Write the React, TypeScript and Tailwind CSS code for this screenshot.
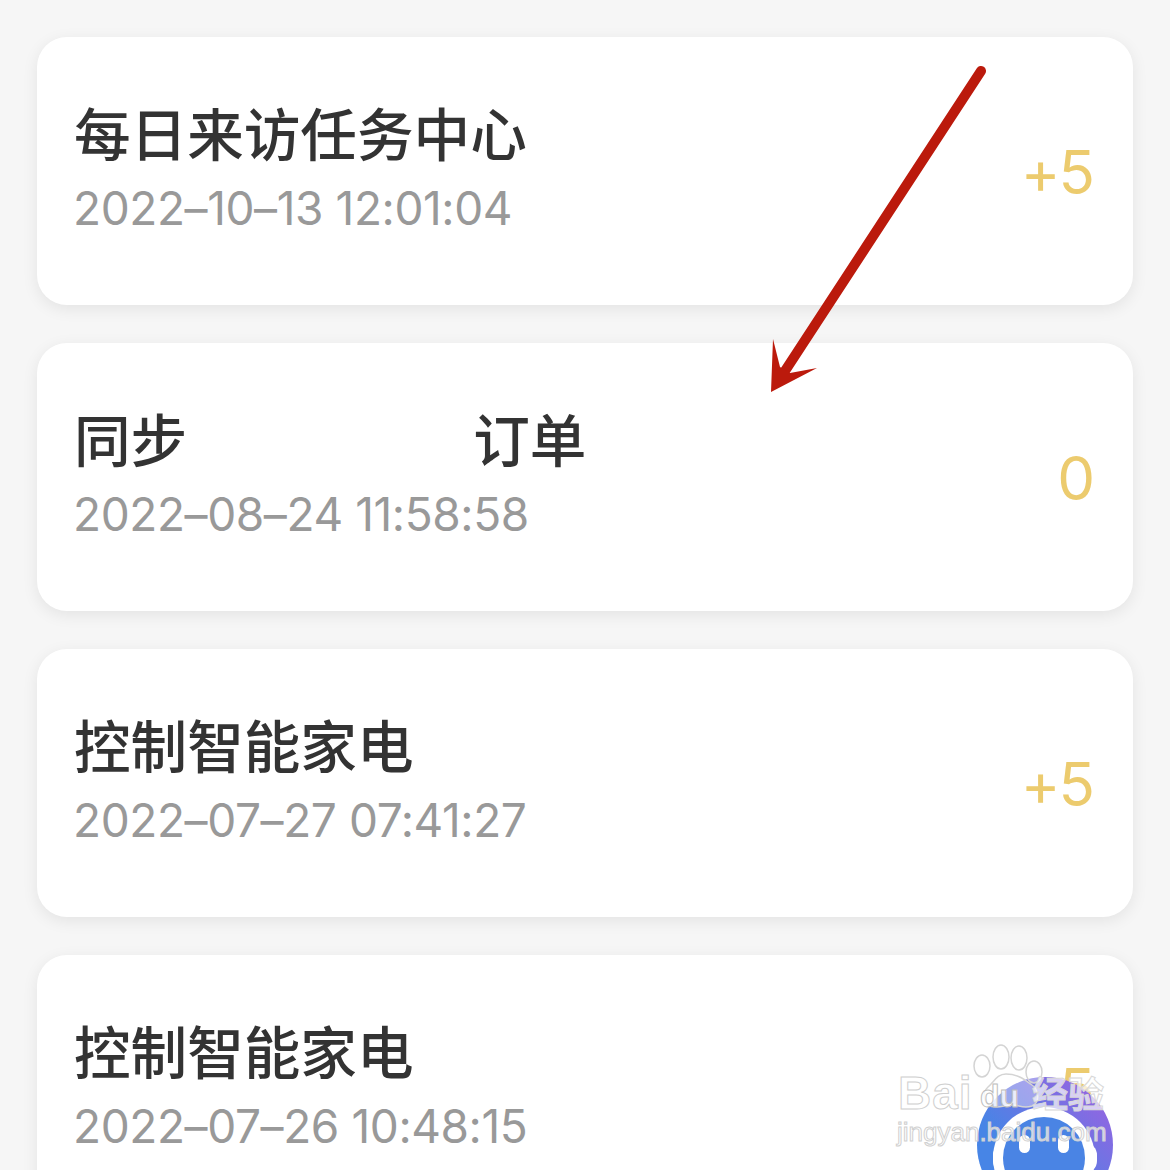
const rows = [
  { title: '每日来访任务中心', date: '2022–10–13 12:01:04', value: '+5' },
  { title: '同步', suffix: '订单', date: '2022–08–24 11:58:58', value: '0' },
  { title: '控制智能家电', date: '2022–07–27 07:41:27', value: '+5' },
  { title: '控制智能家电', date: '2022–07–26 10:48:15', value: '+5' },
];

function RecordCard({ title, suffix, date, value }: { title: string; suffix?: string; date: string; value: string }) {
  return (
    <div className="flex h-[268px] shrink-0 items-center justify-between rounded-[30px] bg-white pl-[37px] pr-[40px] shadow-[0_4px_16px_rgba(0,0,0,0.08)]">
      <div className="-mt-[5px] flex flex-col">
        <div className="-mt-[4px] flex h-[70px] items-center font-['Noto_Sans_CJK_SC',sans-serif] text-[56.6px] font-medium leading-[70px] text-[#333333]">
          <span>{title}</span>
          {suffix && <span className="ml-[286px]">{suffix}</span>}
        </div>
        <div className="-ml-[1px] mt-[12px] font-['Inter',sans-serif] text-[46px] leading-[60px] tracking-[-0.4px] text-[#999999]">{date}</div>
      </div>
      <div className="mt-[1px] font-['Inter',sans-serif] text-[60px] leading-none tracking-[-2px] text-[#eccb6e]">{value}</div>
    </div>
  );
}

function Arrow() {
  return (
    <svg className="pointer-events-none absolute left-0 top-0" width="1170" height="1170" viewBox="0 0 1170 1170">
      <line x1="981" y1="71" x2="783" y2="374" stroke="#bb1a0c" strokeWidth="10" strokeLinecap="round" />
      <polygon points="771,392 773,339 780,367 790,373 817,368" fill="#bb1a0c" />
    </svg>
  );
}

function Assistant() {
  return (
    <svg className="absolute left-[977px] top-[1077px]" width="136" height="93" viewBox="0 0 136 93">
      <defs>
        <linearGradient id="assistantFill" x1="0" y1="1" x2="1" y2="0">
          <stop offset="0.35" stopColor="#4785e6" />
          <stop offset="1" stopColor="#a35ee0" />
        </linearGradient>
      </defs>
      <circle cx="68" cy="68" r="68" fill="url(#assistantFill)" />
      <rect x="16" y="66" width="104" height="30" rx="12" fill="#ffffff" />
      <circle cx="67" cy="81" r="51" fill="#ffffff" />
      <circle cx="67" cy="81" r="41" fill="#4a84e4" />
      <rect x="42" y="58" width="11" height="18" rx="5.5" fill="#ffffff" />
      <rect x="81" y="58" width="11" height="18" rx="5.5" fill="#ffffff" />
    </svg>
  );
}

function Watermark() {
  return (
    <div className="pointer-events-none absolute left-[896px] top-[1044px] h-[104px] w-[214px]">
      <svg className="absolute left-[70px] top-0" width="90" height="70" viewBox="0 0 90 70" fill="#ffffff" fillOpacity="0.35" stroke="#d4d4d4" strokeWidth="1.5">
        <ellipse cx="16" cy="22" rx="8" ry="11" />
        <ellipse cx="35" cy="13" rx="8" ry="12" />
        <ellipse cx="53" cy="14" rx="8" ry="12" />
        <ellipse cx="68" cy="28" rx="8" ry="11" />
        <path d="M40 30c-9 0-12 8-18 13-6 5-6 20 8 20 6 0 11-2 17-2s10 4 19 1c9-4 6-17 0-21-7-5-14-11-26-11z" />
      </svg>
      <div className="absolute left-[2px] top-[26px] font-['Liberation_Sans',sans-serif] text-[46px] font-bold leading-[46px] tracking-[1px] text-white/60 [-webkit-text-stroke:1px_#cfcfcf]">
        Bai
      </div>
      <div className="absolute left-[84px] top-[36px] font-['Liberation_Sans',sans-serif] text-[32px] font-bold leading-[32px] text-[#ffffff]/80 [-webkit-text-stroke:1px_#bdbdbd]">
        du
      </div>
      <div className="absolute left-[136px] top-[28px] font-['Noto_Sans_CJK_SC',sans-serif] text-[36px] font-bold leading-[40px] text-white/70 [-webkit-text-stroke:1px_#d8d8d8]">
        经验
      </div>
      <div className="absolute left-[1px] top-[72px] whitespace-nowrap font-['Liberation_Sans',sans-serif] text-[26px] leading-[32px] text-white/70 [-webkit-text-stroke:1px_#d0d0d0]">
        jingyan.baidu.com
      </div>
    </div>
  );
}

export default function App() {
  return (
    <div className="relative h-[1170px] w-[1170px] overflow-hidden bg-[#f6f6f6]">
      <div className="flex flex-col gap-[38px] px-[37px] pt-[37px]">
        {rows.map((row, i) => (
          <RecordCard key={i} {...row} />
        ))}
      </div>
      <Arrow />
      <Assistant />
      <Watermark />
    </div>
  );
}
